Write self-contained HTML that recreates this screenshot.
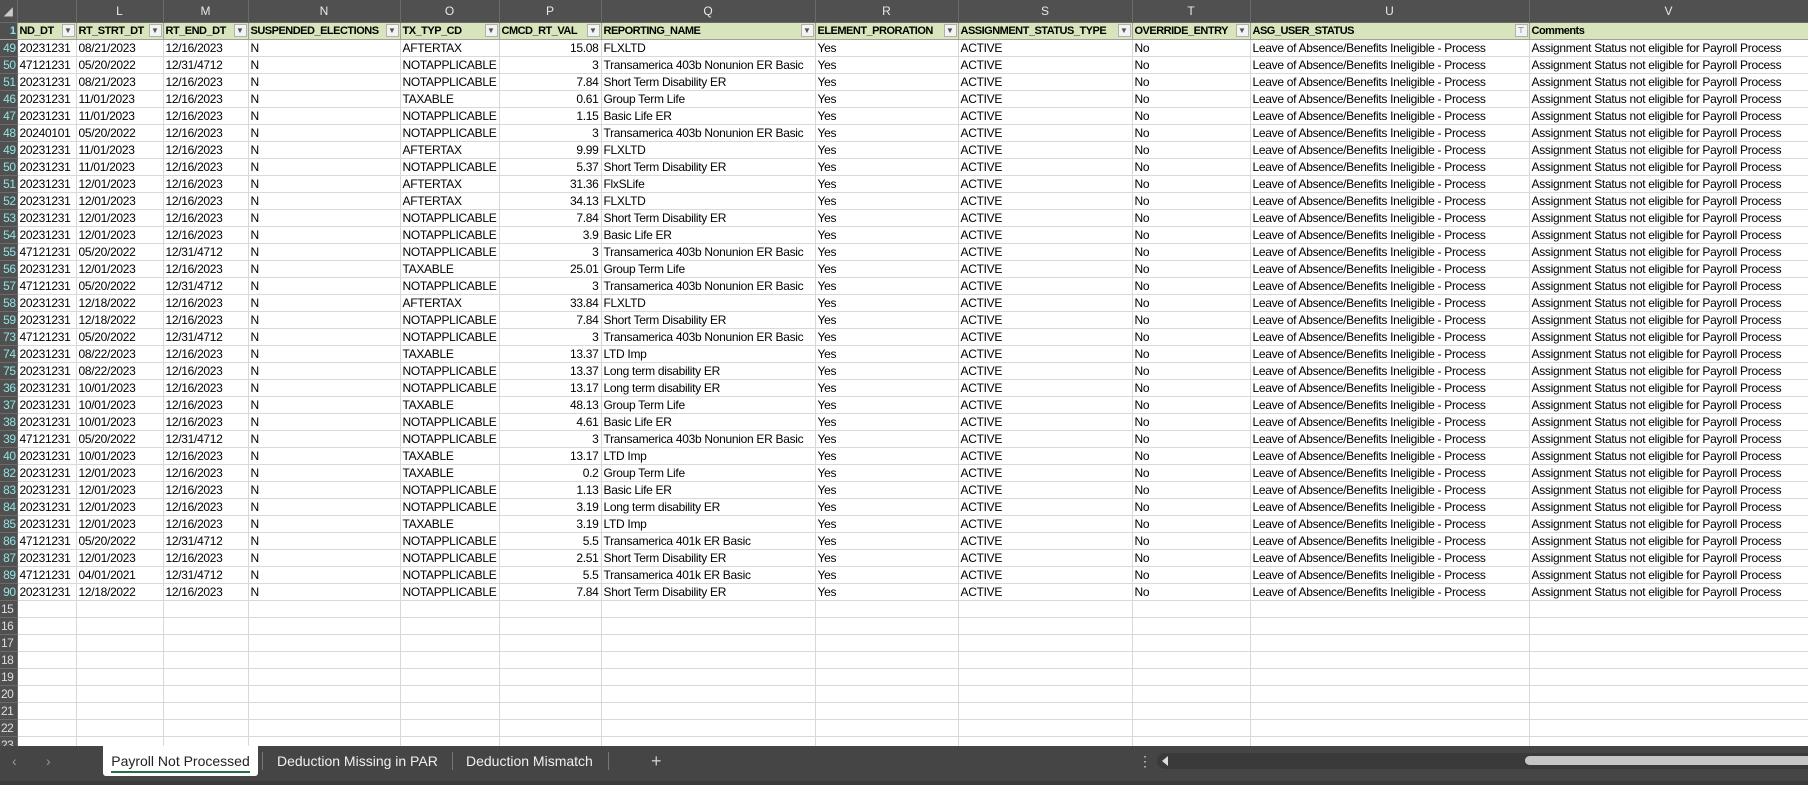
<!DOCTYPE html>
<html><head><meta charset="utf-8"><style>
body{margin:0;width:1808px;height:785px;overflow:hidden;background:#fff;font-family:"Liberation Sans",sans-serif;font-size:12px;letter-spacing:-0.3px;color:#000;position:relative}
table{border-collapse:collapse;table-layout:fixed;position:absolute;left:0;top:0;width:1808px}
td{height:16px;padding:0 2px;border-right:1px solid #d9d9d9;border-bottom:1px solid #d9d9d9;white-space:nowrap;overflow:hidden;line-height:16px}
tr.L td{background:#505050;color:#e8e8e8;text-align:center;height:22px;border-color:#6a6a6a;letter-spacing:0}
tr.H td{background:#d8e4bc;font-weight:bold;font-size:11px;letter-spacing:-0.5px;height:16px;border-color:#a0a0a0;position:relative}
tr.H td i{position:absolute;right:1px;top:1px;width:13px;height:13px;background:#f3f3f3;border:1px solid #b0b0b0;box-sizing:border-box;font-style:normal;font-weight:normal;font-size:8px;line-height:12px;text-align:center;color:#555;letter-spacing:0}
td.r{background:#505050!important;color:#8fe3e3;text-align:right;padding:0 1px;border-color:#6a6a6a;letter-spacing:-0.5px}
td.e{color:#ddd;text-align:left}
.n{text-align:right}
#tabs{position:absolute;left:0;top:746px;width:1808px;height:35px;background:#454545;color:#f0f0f0;font-size:14px;letter-spacing:0}
#bot{position:absolute;left:0;top:781px;width:1808px;height:4px;background:#3a3a3a}
.tab{position:absolute;top:0;height:30px;line-height:30px}
</style></head><body>
<table>
<colgroup><col style="width:17px"><col style="width:59px"><col style="width:87px"><col style="width:85px"><col style="width:152px"><col style="width:99px"><col style="width:102px"><col style="width:214px"><col style="width:143px"><col style="width:174px"><col style="width:118px"><col style="width:279px"><col style="width:279px"></colgroup>
<tr class="L"><td class="r" style="color:#ccc;text-align:center">◢</td><td></td><td>L</td><td>M</td><td>N</td><td>O</td><td>P</td><td>Q</td><td>R</td><td>S</td><td>T</td><td>U</td><td>V</td></tr>
<tr class="H"><td class="r">1</td><td>ND_DT<i>▼</i></td><td>RT_STRT_DT<i>▼</i></td><td>RT_END_DT<i>▼</i></td><td>SUSPENDED_ELECTIONS<i>▼</i></td><td>TX_TYP_CD<i>▼</i></td><td>CMCD_RT_VAL<i>▼</i></td><td>REPORTING_NAME<i>▼</i></td><td>ELEMENT_PRORATION<i>▼</i></td><td>ASSIGNMENT_STATUS_TYPE<i>▼</i></td><td>OVERRIDE_ENTRY<i>▼</i></td><td>ASG_USER_STATUS<i>⊤</i></td><td>Comments</td></tr>
<tr><td class="r">49</td><td>20231231</td><td>08/21/2023</td><td>12/16/2023</td><td>N</td><td>AFTERTAX</td><td class="n">15.08</td><td>FLXLTD</td><td>Yes</td><td>ACTIVE</td><td>No</td><td>Leave of Absence/Benefits Ineligible - Process</td><td>Assignment Status not eligible for Payroll Process</td></tr>
<tr><td class="r">50</td><td>47121231</td><td>05/20/2022</td><td>12/31/4712</td><td>N</td><td>NOTAPPLICABLE</td><td class="n">3</td><td>Transamerica 403b Nonunion ER Basic</td><td>Yes</td><td>ACTIVE</td><td>No</td><td>Leave of Absence/Benefits Ineligible - Process</td><td>Assignment Status not eligible for Payroll Process</td></tr>
<tr><td class="r">51</td><td>20231231</td><td>08/21/2023</td><td>12/16/2023</td><td>N</td><td>NOTAPPLICABLE</td><td class="n">7.84</td><td>Short Term Disability ER</td><td>Yes</td><td>ACTIVE</td><td>No</td><td>Leave of Absence/Benefits Ineligible - Process</td><td>Assignment Status not eligible for Payroll Process</td></tr>
<tr><td class="r">46</td><td>20231231</td><td>11/01/2023</td><td>12/16/2023</td><td>N</td><td>TAXABLE</td><td class="n">0.61</td><td>Group Term Life</td><td>Yes</td><td>ACTIVE</td><td>No</td><td>Leave of Absence/Benefits Ineligible - Process</td><td>Assignment Status not eligible for Payroll Process</td></tr>
<tr><td class="r">47</td><td>20231231</td><td>11/01/2023</td><td>12/16/2023</td><td>N</td><td>NOTAPPLICABLE</td><td class="n">1.15</td><td>Basic Life ER</td><td>Yes</td><td>ACTIVE</td><td>No</td><td>Leave of Absence/Benefits Ineligible - Process</td><td>Assignment Status not eligible for Payroll Process</td></tr>
<tr><td class="r">48</td><td>20240101</td><td>05/20/2022</td><td>12/16/2023</td><td>N</td><td>NOTAPPLICABLE</td><td class="n">3</td><td>Transamerica 403b Nonunion ER Basic</td><td>Yes</td><td>ACTIVE</td><td>No</td><td>Leave of Absence/Benefits Ineligible - Process</td><td>Assignment Status not eligible for Payroll Process</td></tr>
<tr><td class="r">49</td><td>20231231</td><td>11/01/2023</td><td>12/16/2023</td><td>N</td><td>AFTERTAX</td><td class="n">9.99</td><td>FLXLTD</td><td>Yes</td><td>ACTIVE</td><td>No</td><td>Leave of Absence/Benefits Ineligible - Process</td><td>Assignment Status not eligible for Payroll Process</td></tr>
<tr><td class="r">50</td><td>20231231</td><td>11/01/2023</td><td>12/16/2023</td><td>N</td><td>NOTAPPLICABLE</td><td class="n">5.37</td><td>Short Term Disability ER</td><td>Yes</td><td>ACTIVE</td><td>No</td><td>Leave of Absence/Benefits Ineligible - Process</td><td>Assignment Status not eligible for Payroll Process</td></tr>
<tr><td class="r">51</td><td>20231231</td><td>12/01/2023</td><td>12/16/2023</td><td>N</td><td>AFTERTAX</td><td class="n">31.36</td><td>FlxSLife</td><td>Yes</td><td>ACTIVE</td><td>No</td><td>Leave of Absence/Benefits Ineligible - Process</td><td>Assignment Status not eligible for Payroll Process</td></tr>
<tr><td class="r">52</td><td>20231231</td><td>12/01/2023</td><td>12/16/2023</td><td>N</td><td>AFTERTAX</td><td class="n">34.13</td><td>FLXLTD</td><td>Yes</td><td>ACTIVE</td><td>No</td><td>Leave of Absence/Benefits Ineligible - Process</td><td>Assignment Status not eligible for Payroll Process</td></tr>
<tr><td class="r">53</td><td>20231231</td><td>12/01/2023</td><td>12/16/2023</td><td>N</td><td>NOTAPPLICABLE</td><td class="n">7.84</td><td>Short Term Disability ER</td><td>Yes</td><td>ACTIVE</td><td>No</td><td>Leave of Absence/Benefits Ineligible - Process</td><td>Assignment Status not eligible for Payroll Process</td></tr>
<tr><td class="r">54</td><td>20231231</td><td>12/01/2023</td><td>12/16/2023</td><td>N</td><td>NOTAPPLICABLE</td><td class="n">3.9</td><td>Basic Life ER</td><td>Yes</td><td>ACTIVE</td><td>No</td><td>Leave of Absence/Benefits Ineligible - Process</td><td>Assignment Status not eligible for Payroll Process</td></tr>
<tr><td class="r">55</td><td>47121231</td><td>05/20/2022</td><td>12/31/4712</td><td>N</td><td>NOTAPPLICABLE</td><td class="n">3</td><td>Transamerica 403b Nonunion ER Basic</td><td>Yes</td><td>ACTIVE</td><td>No</td><td>Leave of Absence/Benefits Ineligible - Process</td><td>Assignment Status not eligible for Payroll Process</td></tr>
<tr><td class="r">56</td><td>20231231</td><td>12/01/2023</td><td>12/16/2023</td><td>N</td><td>TAXABLE</td><td class="n">25.01</td><td>Group Term Life</td><td>Yes</td><td>ACTIVE</td><td>No</td><td>Leave of Absence/Benefits Ineligible - Process</td><td>Assignment Status not eligible for Payroll Process</td></tr>
<tr><td class="r">57</td><td>47121231</td><td>05/20/2022</td><td>12/31/4712</td><td>N</td><td>NOTAPPLICABLE</td><td class="n">3</td><td>Transamerica 403b Nonunion ER Basic</td><td>Yes</td><td>ACTIVE</td><td>No</td><td>Leave of Absence/Benefits Ineligible - Process</td><td>Assignment Status not eligible for Payroll Process</td></tr>
<tr><td class="r">58</td><td>20231231</td><td>12/18/2022</td><td>12/16/2023</td><td>N</td><td>AFTERTAX</td><td class="n">33.84</td><td>FLXLTD</td><td>Yes</td><td>ACTIVE</td><td>No</td><td>Leave of Absence/Benefits Ineligible - Process</td><td>Assignment Status not eligible for Payroll Process</td></tr>
<tr><td class="r">59</td><td>20231231</td><td>12/18/2022</td><td>12/16/2023</td><td>N</td><td>NOTAPPLICABLE</td><td class="n">7.84</td><td>Short Term Disability ER</td><td>Yes</td><td>ACTIVE</td><td>No</td><td>Leave of Absence/Benefits Ineligible - Process</td><td>Assignment Status not eligible for Payroll Process</td></tr>
<tr><td class="r">73</td><td>47121231</td><td>05/20/2022</td><td>12/31/4712</td><td>N</td><td>NOTAPPLICABLE</td><td class="n">3</td><td>Transamerica 403b Nonunion ER Basic</td><td>Yes</td><td>ACTIVE</td><td>No</td><td>Leave of Absence/Benefits Ineligible - Process</td><td>Assignment Status not eligible for Payroll Process</td></tr>
<tr><td class="r">74</td><td>20231231</td><td>08/22/2023</td><td>12/16/2023</td><td>N</td><td>TAXABLE</td><td class="n">13.37</td><td>LTD Imp</td><td>Yes</td><td>ACTIVE</td><td>No</td><td>Leave of Absence/Benefits Ineligible - Process</td><td>Assignment Status not eligible for Payroll Process</td></tr>
<tr><td class="r">75</td><td>20231231</td><td>08/22/2023</td><td>12/16/2023</td><td>N</td><td>NOTAPPLICABLE</td><td class="n">13.37</td><td>Long term disability ER</td><td>Yes</td><td>ACTIVE</td><td>No</td><td>Leave of Absence/Benefits Ineligible - Process</td><td>Assignment Status not eligible for Payroll Process</td></tr>
<tr><td class="r">36</td><td>20231231</td><td>10/01/2023</td><td>12/16/2023</td><td>N</td><td>NOTAPPLICABLE</td><td class="n">13.17</td><td>Long term disability ER</td><td>Yes</td><td>ACTIVE</td><td>No</td><td>Leave of Absence/Benefits Ineligible - Process</td><td>Assignment Status not eligible for Payroll Process</td></tr>
<tr><td class="r">37</td><td>20231231</td><td>10/01/2023</td><td>12/16/2023</td><td>N</td><td>TAXABLE</td><td class="n">48.13</td><td>Group Term Life</td><td>Yes</td><td>ACTIVE</td><td>No</td><td>Leave of Absence/Benefits Ineligible - Process</td><td>Assignment Status not eligible for Payroll Process</td></tr>
<tr><td class="r">38</td><td>20231231</td><td>10/01/2023</td><td>12/16/2023</td><td>N</td><td>NOTAPPLICABLE</td><td class="n">4.61</td><td>Basic Life ER</td><td>Yes</td><td>ACTIVE</td><td>No</td><td>Leave of Absence/Benefits Ineligible - Process</td><td>Assignment Status not eligible for Payroll Process</td></tr>
<tr><td class="r">39</td><td>47121231</td><td>05/20/2022</td><td>12/31/4712</td><td>N</td><td>NOTAPPLICABLE</td><td class="n">3</td><td>Transamerica 403b Nonunion ER Basic</td><td>Yes</td><td>ACTIVE</td><td>No</td><td>Leave of Absence/Benefits Ineligible - Process</td><td>Assignment Status not eligible for Payroll Process</td></tr>
<tr><td class="r">40</td><td>20231231</td><td>10/01/2023</td><td>12/16/2023</td><td>N</td><td>TAXABLE</td><td class="n">13.17</td><td>LTD Imp</td><td>Yes</td><td>ACTIVE</td><td>No</td><td>Leave of Absence/Benefits Ineligible - Process</td><td>Assignment Status not eligible for Payroll Process</td></tr>
<tr><td class="r">82</td><td>20231231</td><td>12/01/2023</td><td>12/16/2023</td><td>N</td><td>TAXABLE</td><td class="n">0.2</td><td>Group Term Life</td><td>Yes</td><td>ACTIVE</td><td>No</td><td>Leave of Absence/Benefits Ineligible - Process</td><td>Assignment Status not eligible for Payroll Process</td></tr>
<tr><td class="r">83</td><td>20231231</td><td>12/01/2023</td><td>12/16/2023</td><td>N</td><td>NOTAPPLICABLE</td><td class="n">1.13</td><td>Basic Life ER</td><td>Yes</td><td>ACTIVE</td><td>No</td><td>Leave of Absence/Benefits Ineligible - Process</td><td>Assignment Status not eligible for Payroll Process</td></tr>
<tr><td class="r">84</td><td>20231231</td><td>12/01/2023</td><td>12/16/2023</td><td>N</td><td>NOTAPPLICABLE</td><td class="n">3.19</td><td>Long term disability ER</td><td>Yes</td><td>ACTIVE</td><td>No</td><td>Leave of Absence/Benefits Ineligible - Process</td><td>Assignment Status not eligible for Payroll Process</td></tr>
<tr><td class="r">85</td><td>20231231</td><td>12/01/2023</td><td>12/16/2023</td><td>N</td><td>TAXABLE</td><td class="n">3.19</td><td>LTD Imp</td><td>Yes</td><td>ACTIVE</td><td>No</td><td>Leave of Absence/Benefits Ineligible - Process</td><td>Assignment Status not eligible for Payroll Process</td></tr>
<tr><td class="r">86</td><td>47121231</td><td>05/20/2022</td><td>12/31/4712</td><td>N</td><td>NOTAPPLICABLE</td><td class="n">5.5</td><td>Transamerica 401k ER Basic</td><td>Yes</td><td>ACTIVE</td><td>No</td><td>Leave of Absence/Benefits Ineligible - Process</td><td>Assignment Status not eligible for Payroll Process</td></tr>
<tr><td class="r">87</td><td>20231231</td><td>12/01/2023</td><td>12/16/2023</td><td>N</td><td>NOTAPPLICABLE</td><td class="n">2.51</td><td>Short Term Disability ER</td><td>Yes</td><td>ACTIVE</td><td>No</td><td>Leave of Absence/Benefits Ineligible - Process</td><td>Assignment Status not eligible for Payroll Process</td></tr>
<tr><td class="r">89</td><td>47121231</td><td>04/01/2021</td><td>12/31/4712</td><td>N</td><td>NOTAPPLICABLE</td><td class="n">5.5</td><td>Transamerica 401k ER Basic</td><td>Yes</td><td>ACTIVE</td><td>No</td><td>Leave of Absence/Benefits Ineligible - Process</td><td>Assignment Status not eligible for Payroll Process</td></tr>
<tr><td class="r">90</td><td>20231231</td><td>12/18/2022</td><td>12/16/2023</td><td>N</td><td>NOTAPPLICABLE</td><td class="n">7.84</td><td>Short Term Disability ER</td><td>Yes</td><td>ACTIVE</td><td>No</td><td>Leave of Absence/Benefits Ineligible - Process</td><td>Assignment Status not eligible for Payroll Process</td></tr>
<tr><td class="r e">15</td><td></td><td></td><td></td><td></td><td></td><td></td><td></td><td></td><td></td><td></td><td></td><td></td></tr>
<tr><td class="r e">16</td><td></td><td></td><td></td><td></td><td></td><td></td><td></td><td></td><td></td><td></td><td></td><td></td></tr>
<tr><td class="r e">17</td><td></td><td></td><td></td><td></td><td></td><td></td><td></td><td></td><td></td><td></td><td></td><td></td></tr>
<tr><td class="r e">18</td><td></td><td></td><td></td><td></td><td></td><td></td><td></td><td></td><td></td><td></td><td></td><td></td></tr>
<tr><td class="r e">19</td><td></td><td></td><td></td><td></td><td></td><td></td><td></td><td></td><td></td><td></td><td></td><td></td></tr>
<tr><td class="r e">20</td><td></td><td></td><td></td><td></td><td></td><td></td><td></td><td></td><td></td><td></td><td></td><td></td></tr>
<tr><td class="r e">21</td><td></td><td></td><td></td><td></td><td></td><td></td><td></td><td></td><td></td><td></td><td></td><td></td></tr>
<tr><td class="r e">22</td><td></td><td></td><td></td><td></td><td></td><td></td><td></td><td></td><td></td><td></td><td></td><td></td></tr>
<tr><td class="r e">23</td><td></td><td></td><td></td><td></td><td></td><td></td><td></td><td></td><td></td><td></td><td></td><td></td></tr>
</table>
<div id="tabs">
<div class="tab" style="left:12px;color:#999">‹</div><div class="tab" style="left:46px;color:#999">›</div>
<div class="tab" style="left:103px;width:155px;height:30px;background:#fff;color:#222;text-align:center;border-radius:0 0 3px 3px"><span style="border-bottom:2px solid #1e7145;padding-bottom:2px">Payroll Not Processed</span></div>
<div style="position:absolute;left:262px;top:6px;width:1px;height:18px;background:#777"></div>
<div class="tab" style="left:277px">Deduction Missing in PAR</div>
<div style="position:absolute;left:452px;top:6px;width:1px;height:18px;background:#777"></div>
<div class="tab" style="left:466px">Deduction Mismatch</div>
<div style="position:absolute;left:608px;top:6px;width:1px;height:18px;background:#777"></div>
<div class="tab" style="left:651px;font-size:18px;color:#ccc">+</div>
<div class="tab" style="left:1138px;color:#ccc">⋮</div>
<div style="position:absolute;left:1157px;top:7px;width:651px;height:16px;background:#3a3a3a;border-radius:8px 0 0 8px"></div>
<div style="position:absolute;left:1162px;top:10px;width:0;height:0;border-top:5px solid transparent;border-bottom:5px solid transparent;border-right:6px solid #ddd"></div>
<div style="position:absolute;left:1525px;top:10px;width:283px;height:9px;background:#c6c6c6;border-radius:5px 0 0 5px"></div>
</div>
<div id="bot"></div>
</body></html>
